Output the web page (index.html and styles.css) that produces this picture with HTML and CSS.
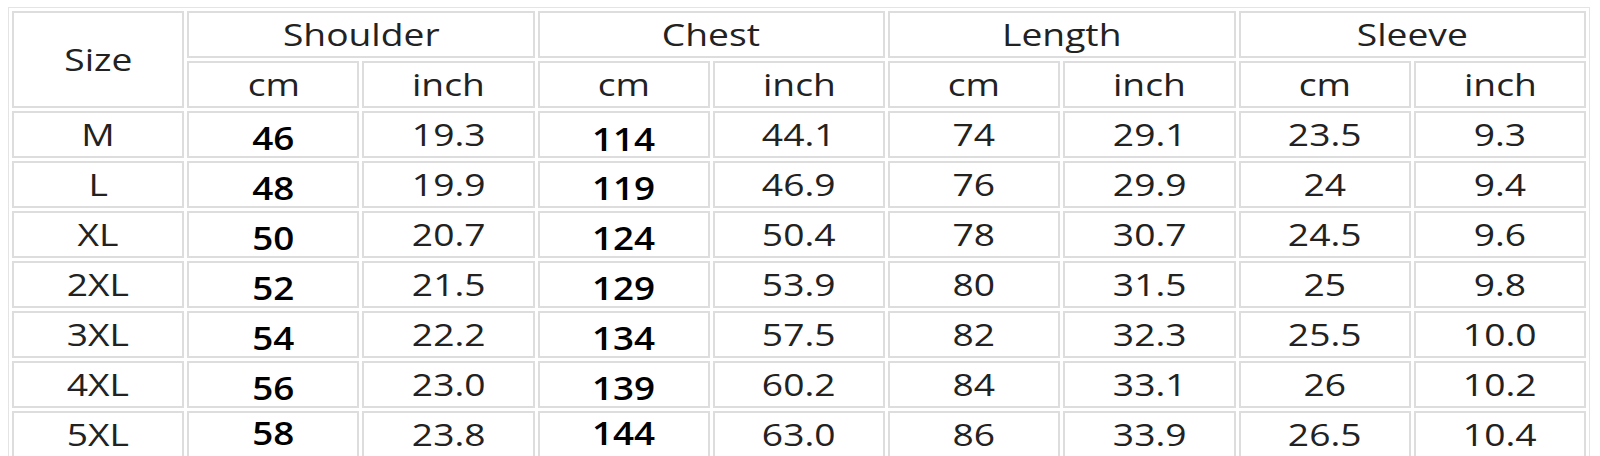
FILE: index.html
```html
<!DOCTYPE html>
<html lang="en">
<head>
<meta charset="utf-8">
<title>Size chart</title>
<link rel="stylesheet" href="styles.css">
</head>
<body>
<table class="size-chart">
  <colgroup>
    <col><col><col><col><col><col><col><col><col>
  </colgroup>
  <thead>
    <tr>
      <th rowspan="2"><span class="t">Size</span></th>
      <th colspan="2"><span class="t">Shoulder</span></th>
      <th colspan="2"><span class="t">Chest</span></th>
      <th colspan="2"><span class="t">Length</span></th>
      <th colspan="2"><span class="t">Sleeve</span></th>
    </tr>
    <tr>
      <th><span class="t">cm</span></th><th><span class="t">inch</span></th>
      <th><span class="t">cm</span></th><th><span class="t">inch</span></th>
      <th><span class="t">cm</span></th><th><span class="t">inch</span></th>
      <th><span class="t">cm</span></th><th><span class="t">inch</span></th>
    </tr>
  </thead>
  <tbody>
    <tr><td><span class="t">M</span></td><td class="b"><span class="t">46</span></td><td><span class="t">19.3</span></td><td class="b low"><span class="t">114</span></td><td><span class="t">44.1</span></td><td><span class="t">74</span></td><td><span class="t">29.1</span></td><td><span class="t">23.5</span></td><td><span class="t">9.3</span></td></tr>
    <tr><td><span class="t">L</span></td><td class="b"><span class="t">48</span></td><td><span class="t">19.9</span></td><td class="b"><span class="t">119</span></td><td><span class="t">46.9</span></td><td><span class="t">76</span></td><td><span class="t">29.9</span></td><td><span class="t">24</span></td><td><span class="t">9.4</span></td></tr>
    <tr><td><span class="t">XL</span></td><td class="b"><span class="t">50</span></td><td><span class="t">20.7</span></td><td class="b"><span class="t">124</span></td><td><span class="t">50.4</span></td><td><span class="t">78</span></td><td><span class="t">30.7</span></td><td><span class="t">24.5</span></td><td><span class="t">9.6</span></td></tr>
    <tr><td><span class="t">2XL</span></td><td class="b"><span class="t">52</span></td><td><span class="t">21.5</span></td><td class="b"><span class="t">129</span></td><td><span class="t">53.9</span></td><td><span class="t">80</span></td><td><span class="t">31.5</span></td><td><span class="t">25</span></td><td><span class="t">9.8</span></td></tr>
    <tr><td><span class="t">3XL</span></td><td class="b"><span class="t">54</span></td><td><span class="t">22.2</span></td><td class="b"><span class="t">134</span></td><td><span class="t">57.5</span></td><td><span class="t">82</span></td><td><span class="t">32.3</span></td><td><span class="t">25.5</span></td><td><span class="t">10.0</span></td></tr>
    <tr><td><span class="t">4XL</span></td><td class="b"><span class="t">56</span></td><td><span class="t">23.0</span></td><td class="b"><span class="t">139</span></td><td><span class="t">60.2</span></td><td><span class="t">84</span></td><td><span class="t">33.1</span></td><td><span class="t">26</span></td><td><span class="t">10.2</span></td></tr>
    <tr><td><span class="t">5XL</span></td><td class="b high"><span class="t">58</span></td><td><span class="t">23.8</span></td><td class="b high"><span class="t">144</span></td><td><span class="t">63.0</span></td><td><span class="t">86</span></td><td><span class="t">33.9</span></td><td><span class="t">26.5</span></td><td><span class="t">10.4</span></td></tr>
  </tbody>
</table>
</body>
</html>
```

FILE: styles.css
```css
html, body {
  margin: 0;
  padding: 0;
  background: #ffffff;
}

body {
  padding: 7px 0 0 8px;
}

.size-chart {
  width: 1582px;
  table-layout: fixed;
  border-collapse: separate;
  border-spacing: 3px;
  border: 1px solid #e4e4e4;
  font-family: "Open Sans", "Liberation Sans", sans-serif;
  font-size: 31px;
  color: #222222;
}

.size-chart th,
.size-chart td {
  height: 43px;
  padding: 0;
  border: 2px solid #dddddd;
  text-align: center;
  vertical-align: middle;
  font-weight: 400;
  line-height: 43px;
  white-space: nowrap;
}

.t {
  display: inline-block;
  transform: scaleX(1.2);
}

.size-chart td.b {
  font-weight: 600;
  font-size: 32px;
  color: #000000;
}

.size-chart td.b .t {
  transform: scaleX(1.15) translateY(3px);
}

.size-chart td.low .t {
  transform: scaleX(1.15) translateY(4px);
}

.size-chart td.high .t {
  transform: scaleX(1.15) translateY(-2px);
}
```
